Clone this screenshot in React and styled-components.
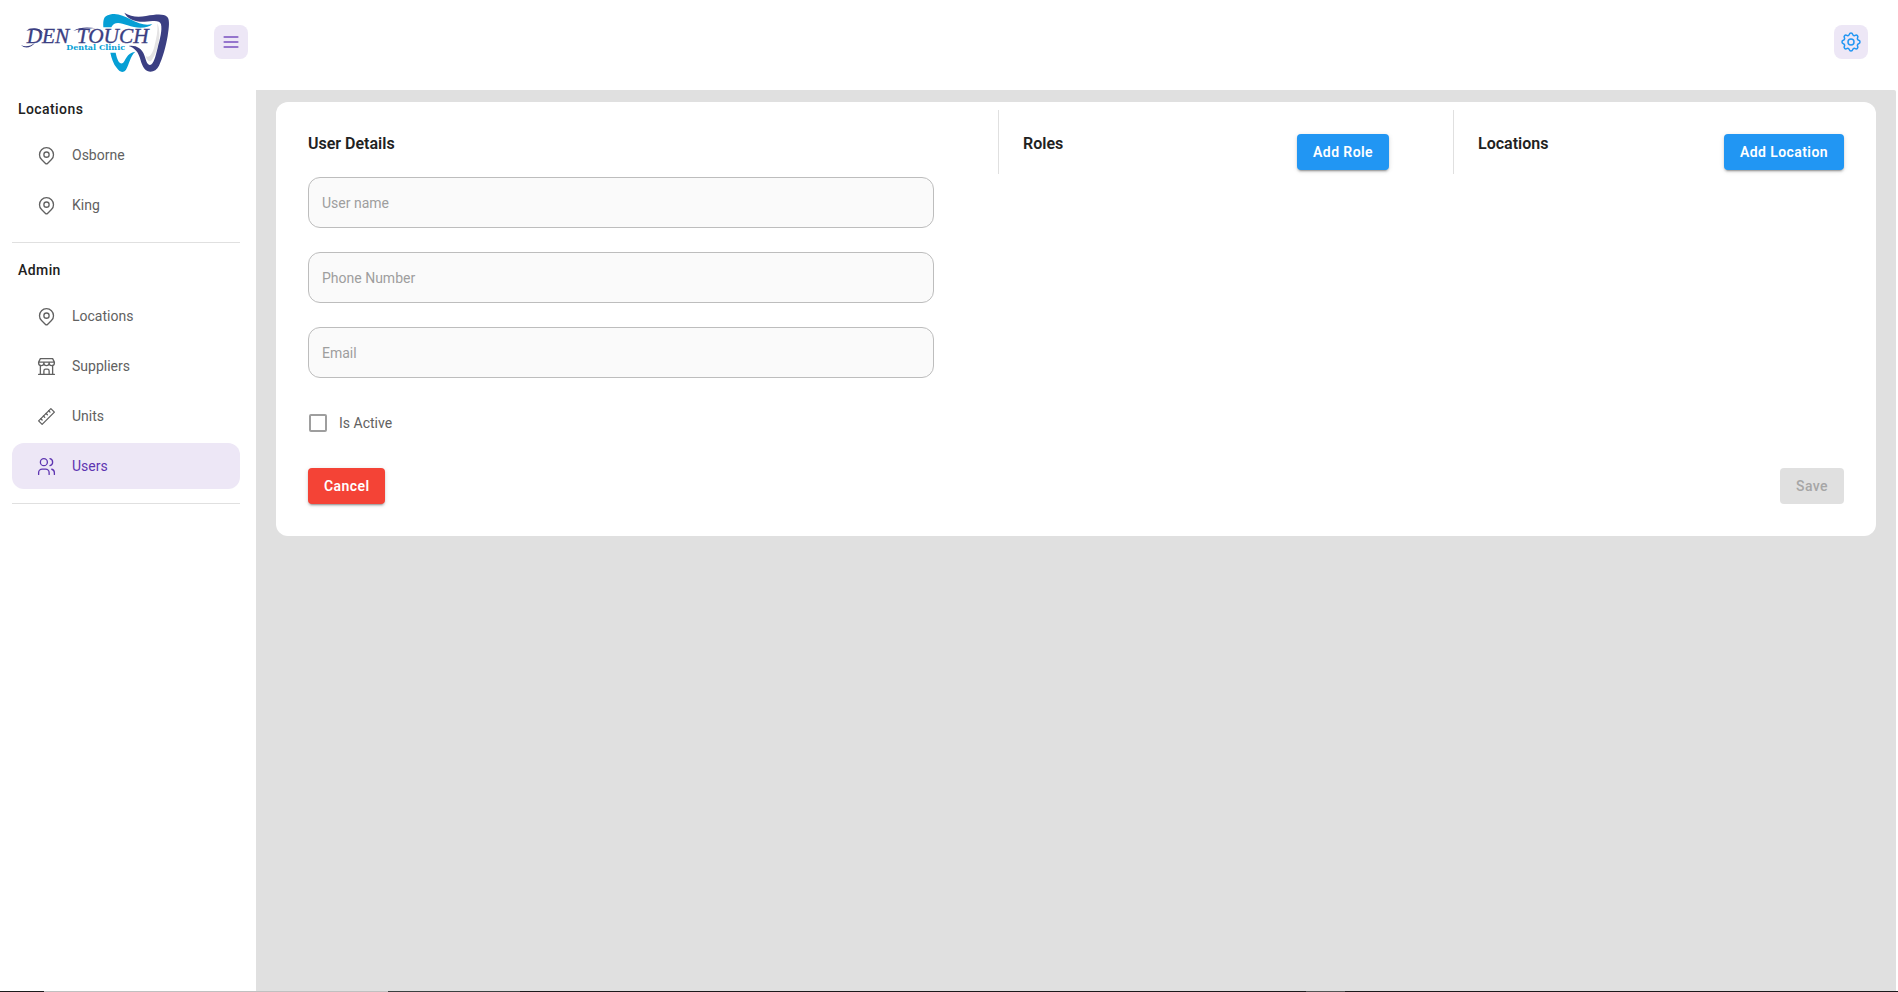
import React, { useState } from "react";
import styled, { createGlobalStyle, css } from "styled-components";
import {
  TbBuildingStore,
  TbMapPin,
  TbMenu2,
  TbRuler2,
  TbSettings,
  TbUsers,
} from "react-icons/tb";

let GlobalStyle = createGlobalStyle`
  *, *::before, *::after {
    box-sizing: border-box;
  }

  body {
    margin: 0;
    background-color: white;
    color: #616161;
    font-family: Roboto, "Liberation Sans", sans-serif;
    font-size: 14px;
  }

  button, input {
    font: inherit;
  }
`;

let Page = styled.div`
  display: flex;
  flex-direction: column;
  min-height: 100vh;
`;

let Header = styled.header`
  display: flex;
  align-items: flex-start;
  justify-content: space-between;
  height: 90px;
  padding: 10px 30px 0 20px;
`;

let Brand = styled.div`
  display: flex;
  justify-content: space-between;
  width: 228px;
`;

let LogoLink = styled.a`
  display: block;
  height: 64px;
`;

let IconButton = styled.button`
  display: flex;
  align-items: center;
  justify-content: center;
  width: 34px;
  height: 34px;
  margin-top: 15px;
  padding: 0;
  border: none;
  border-radius: 8px;
  background-color: #ede7f6;
  color: ${(props) => props.$color};
  cursor: pointer;

  svg {
    width: ${(props) => props.$iconSize};
    height: ${(props) => props.$iconSize};
    stroke-width: ${(props) => props.$stroke};
  }
`;

let Body = styled.div`
  display: flex;
  flex: 1;
`;

let Sidebar = styled.nav`
  flex: 0 0 256px;
  padding: 0 16px 0 12px;
`;

let NavGroup = styled.section`
  padding-bottom: 14px;
  border-bottom: 1px solid #e0e0e0;

  & + & {
    padding-top: 8px;
  }
`;

let NavTitle = styled.h2`
  height: 42px;
  margin: 0;
  padding: 9px 6px 0;
  color: #212121;
  font-size: 14px;
  font-weight: 500;
  line-height: 20px;
  letter-spacing: 0.03em;
`;

let NavList = styled.ul`
  display: flex;
  flex-direction: column;
  gap: 4px;
  margin: 0;
  padding: 0;
  list-style: none;
`;

let NavLink = styled.a`
  display: flex;
  align-items: center;
  gap: 15px;
  height: 46px;
  padding: 0 24px;
  border-radius: 12px;
  color: #616161;
  line-height: 20px;
  text-decoration: none;

  svg {
    width: 21px;
    height: 21px;
    stroke-width: 1.5;
  }

  ${(props) =>
    props.$active &&
    css`
      background-color: #ede7f6;
      color: #5e35b1;
    `}
`;

let Main = styled.main`
  flex: 1;
  min-width: 0;
  margin-right: 2px;
  padding: 12px 20px;
  border-top-right-radius: 2px;
  background-color: #e0e0e0;
`;

let Card = styled.form`
  padding: 32px;
  border-radius: 12px;
  background-color: white;
`;

let Columns = styled.div`
  display: grid;
  grid-template-columns: 690fr 455fr 391fr;
  align-items: start;
`;

let Details = styled.section`
  padding-right: 64px;
`;

let Panel = styled.section`
  display: flex;
  align-items: flex-start;
  justify-content: space-between;
  height: 64px;
  margin-top: -24px;
  padding: 24px ${(props) => (props.$last ? "0" : "64px")} 0 24px;
  border-left: 1px solid #e0e0e0;
`;

let Title = styled.h3`
  margin: 0;
  color: #212121;
  font-size: 16px;
  font-weight: 600;
  line-height: 19px;
`;

let Fields = styled.div`
  display: flex;
  flex-direction: column;
  gap: 24px;
  margin-top: 24px;
`;

let TextField = styled.input`
  width: 100%;
  height: 51px;
  padding: 0 13px;
  border: 1px solid #bdbdbd;
  border-radius: 12px;
  background-color: #fafafa;
  color: #212121;

  &::placeholder {
    color: #9e9e9e;
    opacity: 1;
  }

  &:focus {
    border-color: #2196f3;
    outline: none;
  }
`;

let CheckLabel = styled.label`
  display: inline-flex;
  align-items: center;
  gap: 12px;
  margin: 36px 0;
  line-height: 18px;
`;

let CheckBox = styled.input`
  appearance: none;
  width: 18px;
  height: 18px;
  margin: 0 0 0 1px;
  border: 2px solid #9e9e9e;
  border-radius: 2px;

  &:checked {
    border-color: #2196f3;
    background-color: #2196f3;
  }
`;

let Button = styled.button`
  height: 36px;
  padding: 0 16px;
  border: none;
  border-radius: 4px;
  background-color: ${(props) => props.$color};
  color: white;
  font-weight: 600;
  line-height: 24px;
  letter-spacing: 0.03em;
  white-space: nowrap;
  cursor: pointer;
  box-shadow:
    0 3px 1px -2px rgba(0, 0, 0, 0.2),
    0 2px 2px 0 rgba(0, 0, 0, 0.14),
    0 1px 5px 0 rgba(0, 0, 0, 0.12);

  &:disabled {
    background-color: #e0e0e0;
    color: #a6a6a6;
    font-weight: 500;
    cursor: default;
    box-shadow: none;
  }
`;

let Actions = styled.div`
  display: flex;
  justify-content: space-between;
`;

let BottomEdge = styled.div`
  height: 1px;
  background: linear-gradient(
    to right,
    #1c1a1c 44px,
    #c0c0c0 44px 388px,
    #3a4040 388px 520px,
    #1c1a1c 520px 1306px,
    #555555 1306px 1345px,
    #1c1a1c 1345px
  );
`;

let Logo = () => (
  <svg width="150" height="64" viewBox="60 30 450 192" role="img">
    <title>Dentouch Dental Clinic</title>
    <path
      fill="#e4e3e4"
      d="M472 70C488 105 470 165 453 183C446 186 440 180 437 168C448 176 458 160 463 140C469 115 474 95 472 70Z"
    />
    <path
      fill="#069fd5"
      d="M310 82C309 60 311 51 323 46C348 36 369 47 391 58C417 72 438 78 457 72C444 86 410 87 383 76C358 66 341 65 334 82ZM331 158H347C351 180 359 193 367 190C377 184 379 158 406 155C390 168 388 193 378 209C370 219 360 218 351 205C339 190 335 175 331 158Z"
    />
    <path
      fill="#3b3f83"
      d="M373 38C392 51 415 52 438 48C470 43 491 41 502 51C510 60 507 83 503 108C498 138 488 174 477 197C468 216 447 221 434 207C422 193 421 166 409 153C402 145 395 141 386 138C408 135 426 145 433 166C438 181 441 195 450 195C461 194 467 167 473 143C480 117 487 91 483 73C479 58 457 64 434 65C405 66 382 57 373 38Z"
    />
    <path
      fill="#3b3f83"
      d="M63 135C76 142 91 139 105 128C94 143 75 148 63 135ZM79 92C98 80 122 84 130 101C116 88 99 88 79 92ZM220 93C238 81 263 81 288 85C264 86 239 86 220 93Z"
    />
    <g
      fill="#3b3f83"
      stroke="#3b3f83"
      fontFamily="Liberation Serif, serif"
      fontStyle="italic"
      fontSize="64"
    >
      <text x="80" y="129">
        DEN
      </text>
      <text x="230" y="129">
        TOUCH
      </text>
    </g>
    <text
      x="199"
      y="151"
      fill="#069fd5"
      fontFamily="DejaVu Serif, serif"
      fontSize="24"
      fontWeight="bold"
    >
      Dental Clinic
    </text>
  </svg>
);

let navigation = [
  {
    title: "Locations",
    items: [
      { label: "Osborne", icon: TbMapPin },
      { label: "King", icon: TbMapPin },
    ],
  },
  {
    title: "Admin",
    items: [
      { label: "Locations", icon: TbMapPin },
      { label: "Suppliers", icon: TbBuildingStore },
      { label: "Units", icon: TbRuler2 },
      { label: "Users", icon: TbUsers, active: true },
    ],
  },
];

let UserForm = () => {
  let [active, setActive] = useState(false);

  return (
    <Card onSubmit={(event) => event.preventDefault()}>
      <Columns>
        <Details>
          <Title>User Details</Title>
          <Fields>
            <TextField aria-label="User name" placeholder="User name" />
            <TextField
              type="tel"
              aria-label="Phone Number"
              placeholder="Phone Number"
            />
            <TextField type="email" aria-label="Email" placeholder="Email" />
          </Fields>
          <CheckLabel>
            <CheckBox
              type="checkbox"
              checked={active}
              onChange={(event) => setActive(event.target.checked)}
            />
            Is Active
          </CheckLabel>
        </Details>

        <Panel>
          <Title>Roles</Title>
          <Button type="button" $color="#2196f3">
            Add Role
          </Button>
        </Panel>

        <Panel $last>
          <Title>Locations</Title>
          <Button type="button" $color="#2196f3">
            Add Location
          </Button>
        </Panel>
      </Columns>

      <Actions>
        <Button type="button" $color="#f44336">
          Cancel
        </Button>
        <Button type="submit" disabled>
          Save
        </Button>
      </Actions>
    </Card>
  );
};

export default function App() {
  return (
    <Page>
      <GlobalStyle />
      <Header>
        <Brand>
          <LogoLink href="#home">
            <Logo />
          </LogoLink>
          <IconButton
            type="button"
            aria-label="Toggle menu"
            $color="#9575cd"
            $iconSize="20px"
            $stroke="2.2"
          >
            <TbMenu2 />
          </IconButton>
        </Brand>
        <IconButton
          type="button"
          aria-label="Settings"
          $color="#2196f3"
          $iconSize="24px"
          $stroke="1.5"
        >
          <TbSettings />
        </IconButton>
      </Header>

      <Body>
        <Sidebar>
          {navigation.map((group) => (
            <NavGroup key={group.title}>
              <NavTitle>{group.title}</NavTitle>
              <NavList>
                {group.items.map(({ label, icon: Icon, active }) => (
                  <li key={label}>
                    <NavLink href={`#${label.toLowerCase()}`} $active={active}>
                      <Icon />
                      {label}
                    </NavLink>
                  </li>
                ))}
              </NavList>
            </NavGroup>
          ))}
        </Sidebar>

        <Main>
          <UserForm />
        </Main>
      </Body>
      <BottomEdge />
    </Page>
  );
}
